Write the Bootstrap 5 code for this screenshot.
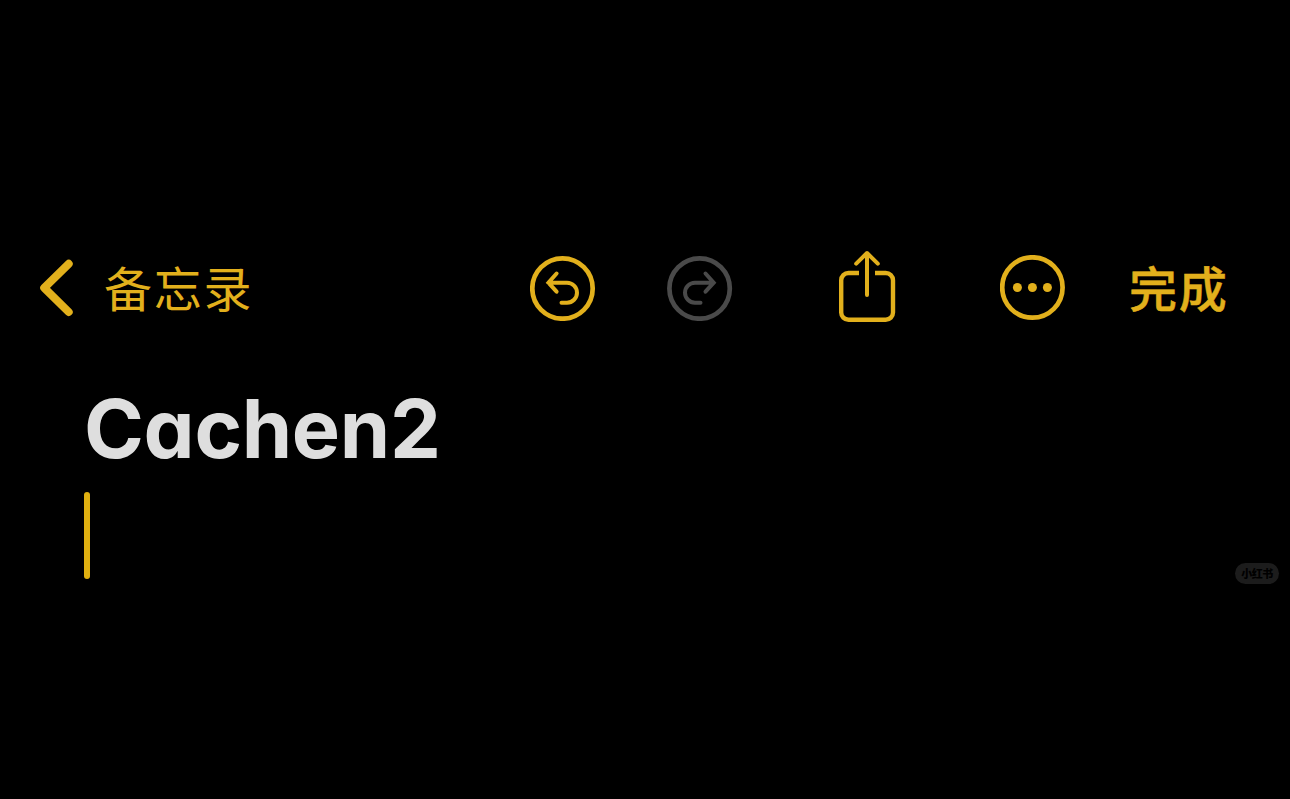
<!DOCTYPE html>
<html lang="zh-CN">
<head>
  <meta charset="UTF-8" />
  <meta name="viewport" content="width=device-width, initial-scale=1" />
  <title>备忘录</title>
  <link href="https://cdn.jsdelivr.net/npm/bootstrap@5.3.0/dist/css/bootstrap.min.css" rel="stylesheet">
  <style>
    body {
      background: #000;
      color: #dedede;
      font-family: Inter, "Noto Sans CJK SC", sans-serif;
      height: 100vh;
    }
    .notes-bar {
      display: grid;
      grid-template-columns: 530px 137px 171px 162px 128px 1fr;
      height: 96px;
      margin-top: 240px;
      color: #e2b01c;
    }
    .notes-bar svg { display: block; fill: none; stroke: currentColor; stroke-linecap: round; stroke-linejoin: round; }
    .notes-bar .btn { color: inherit; border: 0; text-align: left; }
    .notes-bar .btn:disabled { color: #4a4a4a; opacity: 1; }
    .bar-text {
      font-family: "Noto Sans CJK SC", sans-serif;
      font-size: 48px;
      line-height: 72px;
      letter-spacing: 1.7px;
      white-space: nowrap;
    }
    .back-link { padding-left: 39px; gap: 28px; }
    .back-link .bar-text, .done-text { margin-bottom: 4px; }
    .notes-bar .done-text { font-weight: 500; -webkit-text-stroke: 0.5px currentColor; padding-left: 1px !important; }
    .note-title {
      font-size: 81px;
      font-weight: 700;
      line-height: 98px;
      font-feature-settings: "cv11";
      letter-spacing: -0.3px;
    }
    .note-body { padding: 44px 84px 0; }
    .caret { width: 6px; height: 87px; margin-top: 14px; background: #e0b010; border-radius: 3px; }
    .stamp {
      right: 11px;
      top: 563px;
      width: 44px;
      height: 21px;
      background: #1c1c1c;
      color: #000;
      font: 900 11px/20px "Noto Sans CJK SC", sans-serif;
      letter-spacing: -0.5px;
    }
  </style>
</head>
<body class="position-relative overflow-hidden d-flex flex-column">

<!-- Toolbar -->
<nav class="notes-bar align-items-center flex-shrink-0">
  <button type="button" class="btn back-link d-flex align-items-center py-0 pe-0">
    <svg width="37" height="60" viewBox="0 0 37 60" stroke-width="8"><path d="M29.700 5.800 5.200 29.800 29.700 54"/></svg>
    <span class="bar-text">备忘录</span>
  </button>
  <button type="button" class="btn p-0" aria-label="撤销">
    <svg width="66" height="66" viewBox="0 0 66 66">
      <circle cx="32.5" cy="33.5" r="30.2" stroke-width="4.7"/>
      <path stroke-width="4" stroke-linejoin="miter" d="M26.600 18.500 18.400 27.700l8.200 9M18.500 27.700h18.500a10 10 0 0 1 0 20h-5.500"/>
    </svg>
  </button>
  <button type="button" class="btn p-0" aria-label="重做" disabled>
    <svg width="66" height="66" viewBox="0 0 66 66">
      <circle cx="32.6" cy="33.5" r="30.2" stroke-width="4.7"/>
      <path stroke-width="4" stroke-linejoin="miter" d="M38.500 18.500l8.200 9.200-8.200 9M46.500 27.700H28a10 10 0 0 0 0 20h5.500"/>
    </svg>
  </button>
  <button type="button" class="btn p-0" aria-label="共享">
    <svg width="58" height="76" viewBox="0 0 58 76" stroke-width="4.400">
      <path stroke-linecap="butt" d="M21 23H10.500a7.300 7.300 0 0 0-7.300 7.300v32.200a7.300 7.300 0 0 0 7.300 7.300h37.200a7.300 7.300 0 0 0 7.300-7.300V30.300a7.300 7.300 0 0 0-7.300-7.300H37"/>
      <path stroke-width="4" d="M29 45V3.500M18.200 13.700 29 3l10.800 10.700"/>
    </svg>
  </button>
  <button type="button" class="btn p-0" aria-label="更多">
    <svg width="66" height="66" viewBox="0 0 66 66">
      <circle cx="32.400" cy="32.500" r="30.200" stroke-width="4.700"/>
      <g fill="currentColor" stroke="none">
        <circle cx="17.400" cy="32.500" r="4.500"/>
        <circle cx="32.400" cy="32.500" r="4.500"/>
        <circle cx="47.400" cy="32.500" r="4.500"/>
      </g>
    </svg>
  </button>
  <button type="button" class="btn p-0 bar-text done-text">完成</button>
</nav>

<!-- Note -->
<main class="note-body">
  <h1 class="note-title m-0">Cachen2</h1>
  <div class="caret"></div>
</main>

<span class="stamp position-absolute rounded-pill text-center">小红书</span>

<script src="https://cdn.jsdelivr.net/npm/bootstrap@5.3.0/dist/js/bootstrap.bundle.min.js"></script>
</body>
</html>
